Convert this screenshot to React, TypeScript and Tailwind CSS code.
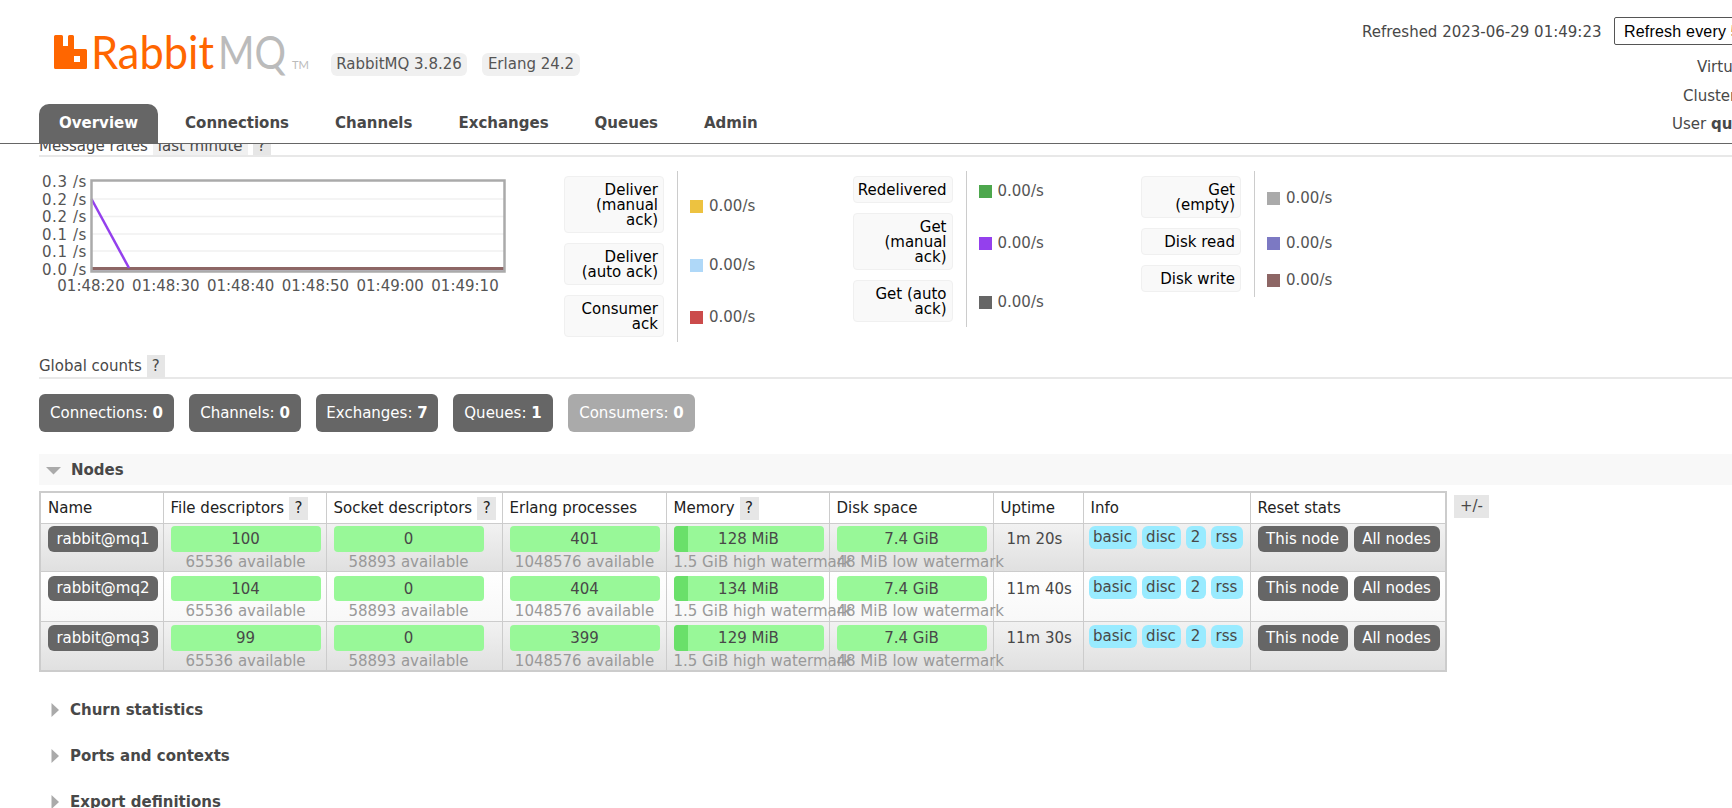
import React from "react";

const font = "font-['DejaVu_Sans',Verdana,sans-serif]";

const tabs = ["Overview", "Connections", "Channels", "Exchanges", "Queues", "Admin"];

const legends = [
  [
    { label: "Deliver\n(manual\nack)", color: "bg-[#edc240]" },
    { label: "Deliver\n(auto ack)", color: "bg-[#afd8f8]" },
    { label: "Consumer\nack", color: "bg-[#cb4b4b]" },
  ],
  [
    { label: "Redelivered", color: "bg-[#4da74d]" },
    { label: "Get\n(manual\nack)", color: "bg-[#9440ed]" },
    { label: "Get (auto\nack)", color: "bg-[#666666]" },
  ],
  [
    { label: "Get\n(empty)", color: "bg-[#aaaaaa]" },
    { label: "Disk read", color: "bg-[#7c79c3]" },
    { label: "Disk write", color: "bg-[#8d6665]" },
  ],
];

const counts = [
  { label: "Connections:", n: 0, w: "w-[135px]" },
  { label: "Channels:", n: 0, w: "w-[112px]" },
  { label: "Exchanges:", n: 7, w: "w-[122px]" },
  { label: "Queues:", n: 1, w: "w-[100px]" },
];

const nodes = [
  { name: "rabbit@mq1", fd: 100, proc: 401, mem: "128 MiB", up: "1m 20s", row: "h-[48px] [&>td]:pt-[2px]", barH: "h-[26px]", odd: true },
  { name: "rabbit@mq2", fd: 104, proc: 404, mem: "134 MiB", up: "11m 40s", row: "h-[50px] [&>td]:pt-[4px]", barH: "h-[25px]", odd: false },
  { name: "rabbit@mq3", fd: 99, proc: 399, mem: "129 MiB", up: "11m 30s", row: "h-[50px] [&>td]:pt-[3px]", barH: "h-[26px]", odd: true },
];

const Help = () => (
  <span className="inline-flex h-[23px] w-[19px] shrink-0 items-center justify-center bg-[#e6e6e6]">?</span>
);

const Bar = ({ value, sub, h, dark, center }: { value: string | number; sub: string; h: string; dark?: number; center?: boolean }) => (
  <div className="w-[150px]">
    <div className={`relative flex items-center justify-center overflow-hidden rounded-[4px] bg-[#98f898] ${h}`}>
      {dark ? <div className="absolute inset-y-0 left-0 bg-[#6ae06a]" style={{ width: dark }} /> : null}
      <span className="relative pt-[2px]">{value}</span>
    </div>
    <div className={`h-[18px] whitespace-nowrap leading-[20px] text-[#999] ${center ? "text-center" : ""}`}>{sub}</div>
  </div>
);

const Chip = ({ children, className }: { children: React.ReactNode; className: string }) => (
  <span className={`inline-flex h-[23px] items-center justify-center rounded-[6px] bg-[#99ebff] ${className}`}>{children}</span>
);

const Btn = ({ children, className = "" }: { children: React.ReactNode; className?: string }) => (
  <span className={`inline-flex items-center justify-center rounded-[6px] bg-[#666] pt-[1px] text-white ${className}`}>
    {children}
  </span>
);

const Chart = () => (
  <svg width="525" height="130" className="shrink-0 text-[15px]" fontFamily="DejaVu Sans, Verdana, sans-serif">
    <g fill="#555" textAnchor="end" letterSpacing="0.6">
      {["0.3 /s", "0.2 /s", "0.2 /s", "0.1 /s", "0.1 /s", "0.0 /s"].map((t, i) => (
        <text key={i} x="48" y={16 + i * 17.6}>
          {t}
        </text>
      ))}
    </g>
    <rect x="52.5" y="9.5" width="413" height="90" fill="#fff" />
    {[28, 45.5, 63, 80].map((y) => (
      <line key={y} x1="53" x2="465" y1={y} y2={y} stroke="#f0f0f0" strokeWidth="1.5" />
    ))}
    <line x1="53" x2="465" y1="99.5" y2="99.5" stroke="#c8c0d8" strokeWidth="1.5" />
    <line x1="53" x2="465" y1="97.5" y2="97.5" stroke="#8d6665" strokeWidth="3" />
    <path d="M52.5 28 L90 97" fill="none" stroke="#9440ed" strokeWidth="2.5" />
    <rect x="52.5" y="9.5" width="413" height="91" fill="none" stroke="#aaa" strokeWidth="2.5" />
    <g fill="#555" textAnchor="middle">
      {["01:48:20", "01:48:30", "01:48:40", "01:48:50", "01:49:00", "01:49:10"].map((t, i) => (
        <text key={t} x={52 + i * 74.8} y="120">
          {t}
        </text>
      ))}
    </g>
  </svg>
);

const Tri = ({ open }: { open?: boolean }) => (
  <svg width="15" height="15" viewBox="0 0 15 15" className="shrink-0">
    {open ? <path d="M0 4 H15 L7.5 11.5 Z" fill="#aaa" /> : <path d="M5.5 0 L13 7 L5.5 14 Z" fill="#aaa" />}
  </svg>
);

export default function App() {
  return (
    <div className={`${font} flex h-[808px] w-[1732px] flex-col overflow-hidden bg-white text-[15px] text-[#484848]`}>
      <header className="relative z-10 flex h-[144px] shrink-0 border-b border-[#666] bg-white">
        <div className="w-[1362px] shrink-0 pl-[39px]">
          <div className="flex h-[104px] items-start">
            <svg width="285" height="80" className="mt-[20px] ml-[15px] shrink-0">
              {/* rabbit mark */}
              <path
                d="M0 16.5 Q0 15 1.5 15 H7.5 Q9 15 9 16.5 V26 H14 V16.5 Q14 15 15.5 15 H18.5 Q20 15 20 16.5 V29 H31.5 Q33 29 33 30.5 V47.5 Q33 49 31.5 49 H1.5 Q0 49 0 47.5 Z M20 36 V42 H26 V36 Z"
                fill="#ff6600"
                fillRule="evenodd"
              />
              <text x="37" y="49" fontFamily="Lato, sans-serif" fontSize="47" fontWeight="400" fill="#ff6600" textLength="123" lengthAdjust="spacingAndGlyphs">
                Rabbit
              </text>
              <text x="164" y="49" fontFamily="Lato, sans-serif" fontSize="47" fontWeight="400" fill="#bbbbbb" textLength="68" lengthAdjust="spacingAndGlyphs">
                MQ
              </text>
              <text x="238" y="49" fontFamily="Lato, sans-serif" fontSize="12" fill="#bbbbbb" textLength="17" lengthAdjust="spacingAndGlyphs">
                TM
              </text>
            </svg>
            <div className="mt-[53px] ml-[-8px] flex gap-[15px]">
              <span className="flex h-[23px] w-[136px] items-center justify-center rounded-[6px] bg-[#f0f0f0] text-[#555]">RabbitMQ 3.8.26</span>
              <span className="flex h-[23px] w-[98px] items-center justify-center rounded-[6px] bg-[#f0f0f0] text-[#555]">Erlang 24.2</span>
            </div>
          </div>
          <nav className="flex h-[39px] gap-[6px] font-bold">
            {tabs.map((t, i) => (
              <span
                key={t}
                className={`flex items-center rounded-t-[10px] px-[20px] ${i === 0 ? "mr-[1px] bg-[#666] text-white" : "text-[#484848]"}`}
              >
                {t}
              </span>
            ))}
          </nav>
        </div>
        <div className="shrink-0 whitespace-nowrap">
          <div className="mt-[17px] flex h-[28px] items-center">
            <span className="w-[246px] pt-[2px]">Refreshed 2023-06-29 01:49:23</span>
            <span className="ml-[6px] flex h-[28px] w-[200px] items-center rounded-[2px] border border-[#555] pt-[1px] pl-[9px] font-['Liberation_Sans',Arial,sans-serif] text-[16px] tracking-[0.2px] text-black">
              Refresh every 5 seconds
            </span>
          </div>
          <div className="mt-[11px] pl-[335px]">Virtual host</div>
          <div className="mt-[6px] pl-[321px]">Cluster rabbit@mq1</div>
          <div className="mt-[6px] pl-[310px]">
            User <b>quorum</b>
          </div>
        </div>
      </header>

      <main className="min-h-0 flex-1 overflow-hidden">
        <div className="mt-[-8px] w-[1732px] pl-[39px]">
          <div className="flex h-[21px] items-center border-b-2 border-[#e8e8e8] leading-[18px]">
            <span>Message rates</span>
            <span className="ml-[5px] bg-[#f0f0f0] px-[5px]">last minute</span>
            <span className="ml-[5px] w-[18px] bg-[#e6e6e6] text-center">?</span>
          </div>

          <div className="mt-[14px] flex h-[171px]">
            <Chart />
            <div className="flex">
              {legends.map((col, i) => (
                <div key={i} className="w-[288.5px]">
                  {col.map((r) => (
                    <div key={r.label} className="flex">
                      <div className="w-[100px] shrink-0 py-[5px]">
                        <div className="whitespace-pre-line rounded-[4px] border border-[#f0f0f0] bg-[#f9f9f9] pt-[6px] pr-[5px] pb-[4px] text-right leading-[15px] text-black">
                          {r.label}
                        </div>
                      </div>
                      <div className="ml-[13px] flex items-center gap-[6px] border-l border-[#ccc] pt-[3px] pl-[12px]">
                        <span className={`h-[13px] w-[13px] ${r.color}`} />
                        <span className="text-[#555]">0.00/s</span>
                      </div>
                    </div>
                  ))}
                </div>
              ))}
            </div>
          </div>

          <div className="mt-[13px] flex h-[24px] items-center border-b-2 border-[#e8e8e8] pt-[1px]">
            <span>Global counts</span>
            <span className="ml-[5px] w-[18px] bg-[#e6e6e6] text-center">?</span>
          </div>

          <div className="mt-[15px] flex gap-[15px] text-white">
            {counts.map((c) => (
              <span key={c.label} className={`flex h-[38px] items-center justify-center rounded-[6px] bg-[#666] ${c.w}`}>
                {c.label}&nbsp;<b>{c.n}</b>
              </span>
            ))}
            <span className="flex h-[38px] w-[127px] items-center justify-center rounded-[6px] bg-[#aaa]">
              Consumers:&nbsp;<b>0</b>
            </span>
          </div>

          <div className="mt-[22px] flex h-[31px] items-center gap-[10px] bg-[#f8f8f8] pt-[1px] pl-[7px] font-bold">
            <Tri open />
            Nodes
          </div>

          <div className="mt-[6px] flex items-start">
            <table className="w-[1406px] table-fixed border-collapse border-2 border-[#ccc]">
              <colgroup>
                <col className="w-[123px]" />
                <col className="w-[163px]" />
                <col className="w-[176px]" />
                <col className="w-[164px]" />
                <col className="w-[163px]" />
                <col className="w-[164px]" />
                <col className="w-[90px]" />
                <col className="w-[167px]" />
                <col className="w-[196px]" />
              </colgroup>
              <thead>
                <tr className="h-[31px] text-left text-[#222] [&>th]:border [&>th]:border-[#ccc] [&>th]:pt-[1px] [&>th]:pl-[7px] [&>th]:font-normal [&>th]:whitespace-nowrap">
                  <th>Name</th>
                  <th>
                    <span className="flex items-center gap-[5px]">File descriptors <Help /></span>
                  </th>
                  <th>
                    <span className="flex items-center gap-[5px]">Socket descriptors <Help /></span>
                  </th>
                  <th>Erlang processes</th>
                  <th>
                    <span className="flex items-center gap-[5px]">Memory <Help /></span>
                  </th>
                  <th>Disk space</th>
                  <th>Uptime</th>
                  <th>Info</th>
                  <th>Reset stats</th>
                </tr>
              </thead>
              <tbody>
                {nodes.map((n) => (
                  <tr
                    key={n.name}
                    className={`${n.row} align-top ${n.odd ? "bg-gradient-to-b from-[#f2f2f2] to-[#e0e0e0]" : "bg-gradient-to-b from-[#ffffff] to-[#f8f8f8]"} [&>td]:border [&>td]:border-[#ccc] [&>td]:pl-[7px]`}
                  >
                    <td>
                      <Btn className={`w-[110px] ${n.barH}`}>{n.name}</Btn>
                    </td>
                    <td>
                      <Bar value={n.fd} sub="65536 available" h={n.barH} center />
                    </td>
                    <td>
                      <Bar value={0} sub="58893 available" h={n.barH} center />
                    </td>
                    <td>
                      <Bar value={n.proc} sub="1048576 available" h={n.barH} center />
                    </td>
                    <td>
                      <Bar value={n.mem} sub="1.5 GiB high watermark" h={n.barH} dark={14} />
                    </td>
                    <td>
                      <Bar value="7.4 GiB" sub="48 MiB low watermark" h={n.barH} />
                    </td>
                    <td className="whitespace-nowrap">
                      <span className="ml-[6px] leading-[26px] text-[#484848]">{n.up}</span>
                    </td>
                    <td>
                      <div className="ml-[-2px] flex gap-[5px]">
                        <Chip className="w-[48px]">basic</Chip>
                        <Chip className="w-[39px]">disc</Chip>
                        <Chip className="w-[20px]">2</Chip>
                        <Chip className="w-[32px]">rss</Chip>
                      </div>
                    </td>
                    <td>
                      <div className="flex gap-[6px]">
                        <Btn className={`w-[90px] ${n.barH}`}>This node</Btn>
                        <Btn className={`w-[86px] ${n.barH}`}>All nodes</Btn>
                      </div>
                    </td>
                  </tr>
                ))}
              </tbody>
            </table>
            <span className="mt-[4px] ml-[7px] flex h-[23px] w-[35px] items-center justify-center bg-[#e6e6e6]">+/-</span>
          </div>

          <div className="mt-[15px] font-bold">
            {["Churn statistics", "Ports and contexts", "Export definitions"].map((s) => (
              <div key={s} className="flex h-[46px] items-center gap-[9px] pl-[7px]">
                <Tri />
                {s}
              </div>
            ))}
          </div>
        </div>
      </main>
    </div>
  );
}
